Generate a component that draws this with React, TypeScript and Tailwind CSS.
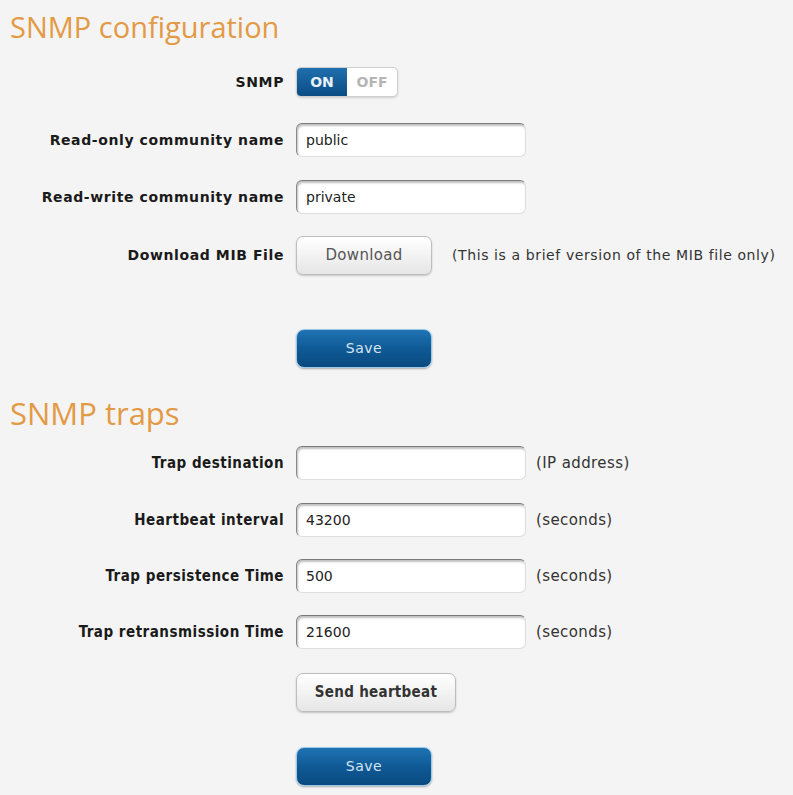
import React from "react"

const labelCls =
  "w-[296px] shrink-0 pr-[12px] text-right text-[14px] font-bold tracking-[0.6px] text-[#1a1a1a] [font-family:'DejaVu_Sans',sans-serif]"
const trapLabelCls =
  "w-[296px] shrink-0 pr-[12px] text-right text-[15px] font-bold tracking-[0.5px] text-[#1a1a1a] [font-family:'DejaVu_Sans_Condensed','DejaVu_Sans',sans-serif] [font-stretch:condensed]"
const inputCls =
  "h-[34px] w-[230px] rounded-[6px] border border-[#dedede] border-t-[#7a7a7a] border-l-[#8a8a8a] bg-white px-[9px] text-[14px] text-[#222] shadow-[inset_1px_2px_2px_rgba(0,0,0,0.25)] outline-none [font-family:'DejaVu_Sans',sans-serif]"
const hintCls =
  "ml-[10px] text-[15px] tracking-[0.4px] text-[#333] [font-family:'DejaVu_Sans',sans-serif]"

function SaveButton() {
  return (
    <button className="h-[39px] w-[136px] rounded-[8px] border border-[#9ccbe8] bg-gradient-to-b from-[#1f73b3] via-[#0f5a96] to-[#0a4a80] text-[14px] tracking-[0.5px] text-[#d6e4f2] shadow-[0_1px_2px_rgba(0,0,0,0.3)] [font-family:'DejaVu_Sans',sans-serif]">
      Save
    </button>
  )
}

function GrayButton({ children, bold }: { children: React.ReactNode; bold?: boolean }) {
  return (
    <button
      className={
        "h-[39px] rounded-[7px] border border-[#bdbdbd] bg-gradient-to-b from-[#ffffff] to-[#e6e6e6] shadow-[0_1px_2px_rgba(0,0,0,0.2)] " +
        (bold
          ? "w-[160px] text-[15px] font-bold tracking-[0.3px] text-[#333] [font-family:'DejaVu_Sans_Condensed','DejaVu_Sans',sans-serif] [font-stretch:condensed]"
          : "w-[136px] text-[15px] tracking-[0.3px] text-[#555] [font-family:'DejaVu_Sans',sans-serif]")
      }
    >
      {children}
    </button>
  )
}

export default function App() {
  return (
    <div className="min-h-screen w-[793px] bg-[#f4f4f4] pb-[12px]">
      {/* SNMP configuration */}
      <h2 className="pl-[10px] pt-[11px] text-[29px] leading-[32px] text-[#e39a45] [font-family:'Open_Sans',sans-serif]">
        SNMP configuration
      </h2>

      <div className="mt-[24px] flex h-[30px] items-center">
        <span className={labelCls}>SNMP</span>
        <div className="flex h-[30px] w-[102px] overflow-hidden rounded-[5px] border border-[#cfcfcf] bg-white shadow-[0_1px_2px_rgba(0,0,0,0.15)]">
          <span className="flex w-[50px] items-center justify-center bg-gradient-to-b from-[#1f6fae] to-[#0b4d85] text-[14px] font-bold text-[#e8f0f8] [font-family:'DejaVu_Sans',sans-serif]">
            ON
          </span>
          <span className="flex flex-1 items-center justify-center text-[14px] font-bold text-[#b5b5b5] [font-family:'DejaVu_Sans',sans-serif]">
            OFF
          </span>
        </div>
      </div>

      <div className="mt-[26px] flex items-center">
        <span className={labelCls}>Read-only community name</span>
        <input className={inputCls} defaultValue="public" />
      </div>

      <div className="mt-[23px] flex items-center">
        <span className={labelCls}>Read-write community name</span>
        <input className={inputCls} defaultValue="private" />
      </div>

      <div className="mt-[22px] flex items-center">
        <span className={labelCls}>Download MIB File</span>
        <GrayButton>Download</GrayButton>
        <span className="ml-[20px] text-[14px] tracking-[0.6px] text-[#333] [font-family:'DejaVu_Sans',sans-serif]">
          (This is a brief version of the MIB file only)
        </span>
      </div>

      <div className="mt-[54px] pl-[296px]">
        <SaveButton />
      </div>

      {/* SNMP traps */}
      <h2 className="mt-[29px] pl-[10px] text-[31px] leading-[32px] text-[#e39a45] [font-family:'Open_Sans',sans-serif]">
        SNMP traps
      </h2>

      <div className="mt-[17px] flex items-center">
        <span className={trapLabelCls}>Trap destination</span>
        <input className={inputCls} defaultValue="" />
        <span className={hintCls}>(IP address)</span>
      </div>

      <div className="mt-[23px] flex items-center">
        <span className={trapLabelCls}>Heartbeat interval</span>
        <input className={inputCls} defaultValue="43200" />
        <span className={hintCls}>(seconds)</span>
      </div>

      <div className="mt-[22px] flex items-center">
        <span className={trapLabelCls}>Trap persistence Time</span>
        <input className={inputCls} defaultValue="500" />
        <span className={hintCls}>(seconds)</span>
      </div>

      <div className="mt-[22px] flex items-center">
        <span className={trapLabelCls}>Trap retransmission Time</span>
        <input className={inputCls} defaultValue="21600" />
        <span className={hintCls}>(seconds)</span>
      </div>

      <div className="mt-[24px] pl-[296px]">
        <GrayButton bold>Send heartbeat</GrayButton>
      </div>

      <div className="mt-[35px] pl-[296px]">
        <SaveButton />
      </div>
    </div>
  )
}
